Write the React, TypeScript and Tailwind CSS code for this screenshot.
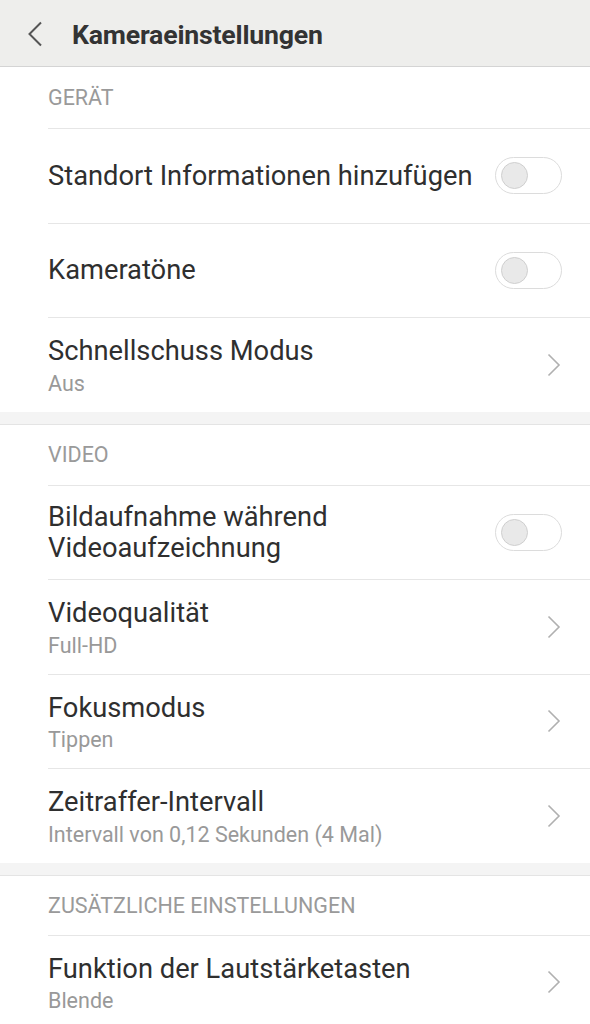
import React from "react";

const font = { fontFamily: "Roboto, 'Noto Sans', sans-serif" };

function Toggle() {
  return (
    <div className="w-[67px] h-[37px] rounded-full border border-[#dcdcdc] bg-white flex items-center pl-[5px] shrink-0">
      <div className="w-[27px] h-[27px] rounded-full bg-[#e9e9e9] border border-[#cfcfcf]" />
    </div>
  );
}

function Chevron() {
  return (
    <svg width="14" height="24" viewBox="0 0 14 24" className="shrink-0 mr-[1px]">
      <path d="M1.5 1.5 L12 12 L1.5 22.5" fill="none" stroke="#b0b0b0" strokeWidth="1.6" />
    </svg>
  );
}

function SectionHeader({ label, h }: { label: string; h: string }) {
  return (
    <div className={`${h} flex items-center pl-[48px]`}>
      <div className="text-[21.5px] text-[#9a9a9a] leading-none pt-[1px]">{label}</div>
    </div>
  );
}

function Row({
  title,
  subtitle,
  toggle,
}: {
  title: React.ReactNode;
  subtitle?: string;
  toggle?: boolean;
}) {
  return (
    <div className="ml-[48px] border-t border-[#e6e6e6] h-[94.5px] flex items-center pr-[28px]">
      <div className={`flex-1 min-w-0 ${subtitle ? "pt-[3px]" : "pt-[1px]"}`}>
        <div className="text-[27.3px] leading-[31px] text-[#2f2f2f]">{title}</div>
        {subtitle && (
          <div className="text-[21.5px] leading-[26px] text-[#999999] mt-[3.5px]">{subtitle}</div>
        )}
      </div>
      {toggle ? <Toggle /> : <Chevron />}
    </div>
  );
}

function Band() {
  return <div className="h-[13px] bg-[#f4f4f4] border-b border-[#e4e4e4]" />;
}

export default function App() {
  return (
    <div className="w-[590px] h-[1024px] overflow-hidden bg-white" style={font}>
      <div className="h-[67px] bg-[#eeeeec] border-b border-[#d4d4d4] flex items-center pt-[2px]">
        <svg width="16" height="26" viewBox="0 0 16 26" className="ml-[27px]">
          <path d="M14 1.5 L2.5 13 L14 24.5" fill="none" stroke="#555555" strokeWidth="2" />
        </svg>
        <div className="ml-[29px] pt-[2px] text-[26.7px] font-bold text-[#333333] tracking-[-0.2px]">
          Kameraeinstellungen
        </div>
      </div>

      <SectionHeader label="GERÄT" h="h-[61px]" />
      <Row title="Standort Informationen hinzufügen" toggle />
      <Row title="Kameratöne" toggle />
      <Row title="Schnellschuss Modus" subtitle="Aus" />
      <Band />

      <SectionHeader label="VIDEO" h="h-[60px]" />
      <Row
        title={
          <>
            Bildaufnahme während
            <br />
            Videoaufzeichnung
          </>
        }
        toggle
      />
      <Row title="Videoqualität" subtitle="Full-HD" />
      <Row title="Fokusmodus" subtitle="Tippen" />
      <Row title="Zeitraffer-Intervall" subtitle="Intervall von 0,12 Sekunden (4 Mal)" />
      <Band />

      <SectionHeader label="ZUSÄTZLICHE EINSTELLUNGEN" h="h-[59px]" />
      <Row title="Funktion der Lautstärketasten" subtitle="Blende" />
    </div>
  );
}
